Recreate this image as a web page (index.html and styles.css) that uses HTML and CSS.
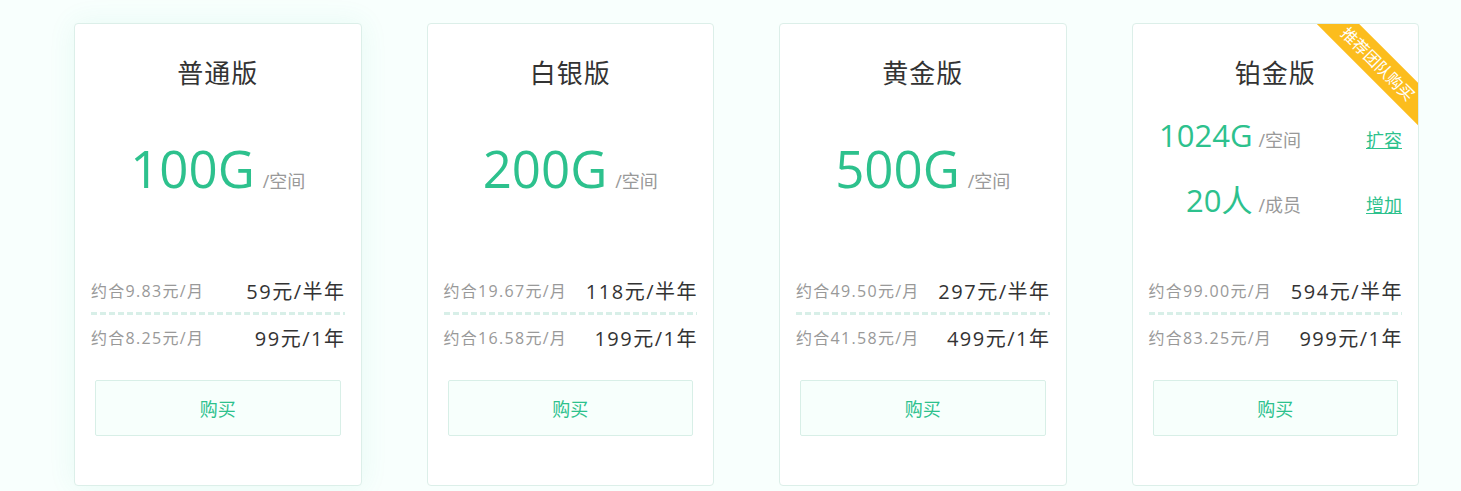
FILE: index.html
```html
<!DOCTYPE html>
<html lang="zh-CN">
<head>
  <meta charset="UTF-8" />
  <title>空间套餐</title>
  <link rel="stylesheet" href="styles.css">
</head>
<body>

  <div class="plans">
    <div class="card card-active">
      <h3 class="title">普通版</h3>
      <div class="amount">
        <span class="num">100G</span><span class="unit">/空间</span>
      </div>
      <div class="prices">
        <div class="row"><span class="avg">约合9.83元/月</span><span class="price">59元/半年</span></div>
        <div class="line"></div>
        <div class="row"><span class="avg">约合8.25元/月</span><span class="price">99元/1年</span></div>
      </div>
      <button class="buy">购买</button>
    </div>

    <div class="card">
      <h3 class="title">白银版</h3>
      <div class="amount">
        <span class="num">200G</span><span class="unit">/空间</span>
      </div>
      <div class="prices">
        <div class="row"><span class="avg">约合19.67元/月</span><span class="price">118元/半年</span></div>
        <div class="line"></div>
        <div class="row"><span class="avg">约合16.58元/月</span><span class="price">199元/1年</span></div>
      </div>
      <button class="buy">购买</button>
    </div>

    <div class="card">
      <h3 class="title">黄金版</h3>
      <div class="amount">
        <span class="num">500G</span><span class="unit">/空间</span>
      </div>
      <div class="prices">
        <div class="row"><span class="avg">约合49.50元/月</span><span class="price">297元/半年</span></div>
        <div class="line"></div>
        <div class="row"><span class="avg">约合41.58元/月</span><span class="price">499元/1年</span></div>
      </div>
      <button class="buy">购买</button>
    </div>

    <div class="card">
      <div class="ribbon">推荐团队购买</div>
      <h3 class="title">铂金版</h3>
      <div class="amount amount-team">
        <div class="team-row">
          <span class="num">1024G</span><span class="unit">/空间</span><a href="#" class="more">扩容</a>
        </div>
        <div class="team-row">
          <span class="num">20人</span><span class="unit">/成员</span><a href="#" class="more">增加</a>
        </div>
      </div>
      <div class="prices">
        <div class="row"><span class="avg">约合99.00元/月</span><span class="price">594元/半年</span></div>
        <div class="line"></div>
        <div class="row"><span class="avg">约合83.25元/月</span><span class="price">999元/1年</span></div>
      </div>
      <button class="buy">购买</button>
    </div>
  </div>

</body>
</html>
```

FILE: styles.css
```css
* {
  box-sizing: border-box;
}

body {
  margin: 0;
  font-family: 'Open Sans', 'Noto Sans CJK SC', sans-serif;
  background: #f8fffd;
  min-height: 100vh;
  padding: 23px 0 0 74px;
}

.plans {
  display: flex;
  gap: 65px;
}

.card {
  position: relative;
  overflow: hidden;
  width: 287.5px;
  height: 463px;
  background: white;
  border: 1px solid #dcefe9;
  border-radius: 4px;
  padding: 0 16px;
}

.card-active {
  box-shadow: 0 0 28px rgba(60, 200, 150, 0.09);
}

.title {
  margin: 31px 0 0;
  font-size: 26px;
  line-height: 36px;
  font-weight: normal;
  text-align: center;
  color: #333;
  letter-spacing: 1px;
}

.amount {
  height: 177px;
  padding-top: 47px;
  text-align: center;
  line-height: 60px;
}

.num {
  font-size: 51px;
  color: #2dc18d;
}

.unit {
  margin-left: 8px;
  font-size: 18px;
  line-height: 1;
  color: #999;
}

.amount-team {
  padding-top: 14px;
}

.team-row {
  display: grid;
  grid-template-columns: 104px 1fr auto;
  align-items: baseline;
  line-height: 60px;
  text-align: left;
}

.team-row .num {
  font-size: 31px;
  text-align: right;
}

.team-row .unit {
  margin-left: 6px;
}

.more {
  font-size: 18px;
  color: #2dc18d;
  text-decoration: underline;
}

.row {
  display: flex;
  justify-content: space-between;
  align-items: center;
  height: 44px;
}

.avg {
  font-size: 16px;
  color: #999;
  letter-spacing: 1.3px;
}

.price {
  font-size: 20px;
  color: #333;
  letter-spacing: 1.5px;
  margin-right: -1px;
}

.line {
  height: 3px;
  background: repeating-linear-gradient(to right, #d8efe8 0 6px, transparent 6px 9px);
}

.buy {
  display: block;
  width: calc(100% - 8px);
  height: 56px;
  margin: 21px 4px 0;
  background: #f7fffc;
  border: 1px solid #d8efe7;
  border-radius: 2px;
  font-family: inherit;
  font-size: 18px;
  color: #2dc18d;
  cursor: pointer;
}

.ribbon {
  position: absolute;
  top: 25px;
  right: -40px;
  width: 160px;
  height: 30px;
  line-height: 30px;
  background: #fcbd1d;
  color: white;
  font-size: 16px;
  text-align: center;
  transform: rotate(45deg);
}
```
